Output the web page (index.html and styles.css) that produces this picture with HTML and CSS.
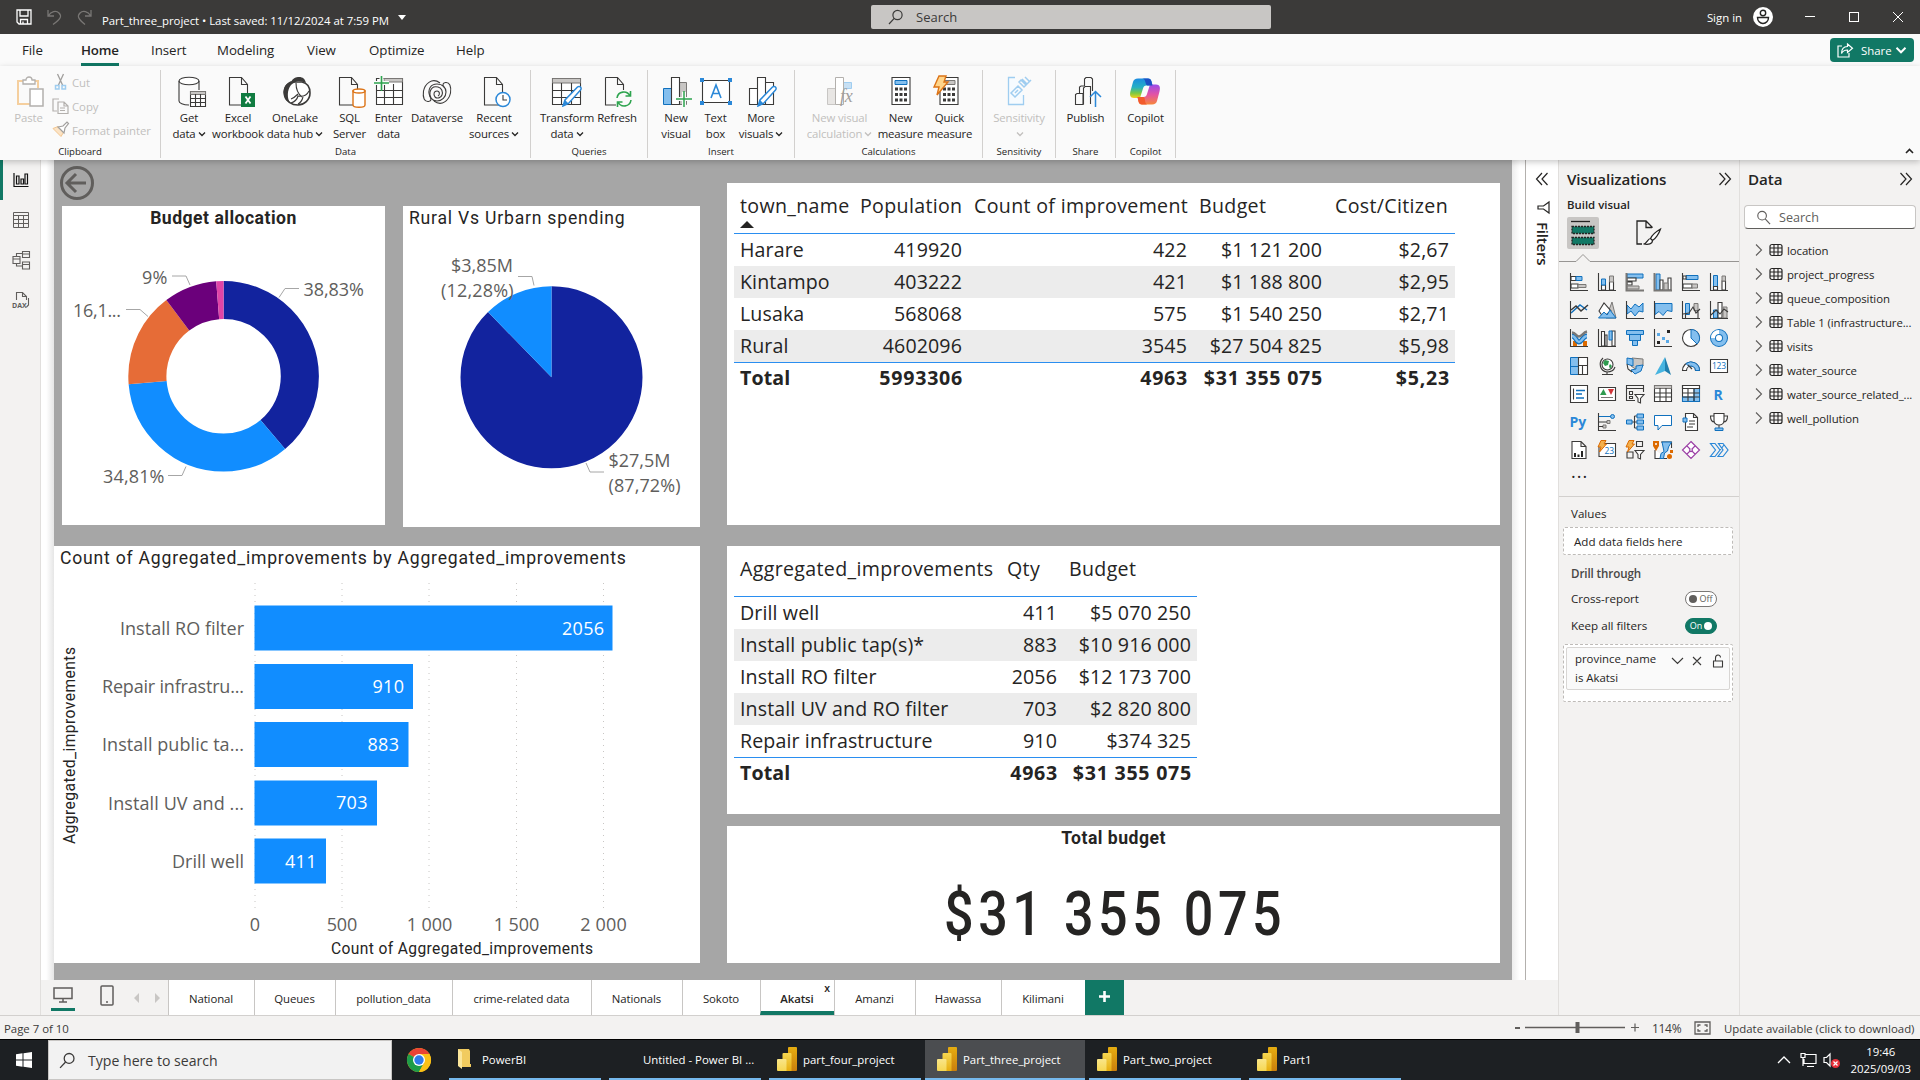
FILE: index.html
```html
<!DOCTYPE html>
<html lang="en">
<head>
<meta charset="utf-8">
<title>Part_three_project - Power BI Desktop</title>
<link rel="stylesheet" href="styles.css">
</head>
<body>
<svg class="defs" width="0" height="0">
  <defs>
    <linearGradient id="cpA" x1="0" y1="0" x2="0" y2="1"><stop offset="0" stop-color="#1b8be0"/><stop offset=".45" stop-color="#25b0c4"/><stop offset=".75" stop-color="#7ac943"/><stop offset="1" stop-color="#f7d01c"/></linearGradient>
    <linearGradient id="cpB" x1="0" y1="0" x2="0" y2="1"><stop offset="0" stop-color="#9a4bea"/><stop offset=".5" stop-color="#e353a4"/><stop offset="1" stop-color="#f7863a"/></linearGradient>
    <linearGradient id="pbA" x1="0" y1="0" x2="0" y2="1"><stop offset="0" stop-color="#e6ad10"/><stop offset="1" stop-color="#c87e0e"/></linearGradient>
    <linearGradient id="pbB" x1="0" y1="0" x2="0" y2="1"><stop offset="0" stop-color="#f6d751"/><stop offset="1" stop-color="#e6ad10"/></linearGradient>
    <linearGradient id="pbC" x1="0" y1="0" x2="0" y2="1"><stop offset="0" stop-color="#f9e589"/><stop offset="1" stop-color="#f6d751"/></linearGradient>
    <symbol id="chev" viewBox="0 0 8 8"><path d="M1 2.500 4 5.500 7 2.500" fill="none" stroke="currentColor" stroke-width="1.300"/></symbol>
    <symbol id="grid" viewBox="0 0 14 14"><rect x="1" y="1.500" width="12" height="11" rx="2" fill="none" stroke="#252423" stroke-width="1.200"/><path d="M1 5h12M1 9h12M5 1.500v11M9 1.500v11" stroke="#252423" stroke-width="1.100"/></symbol>
    <symbol id="next" viewBox="0 0 8 14"><path d="M1 1.500 6.500 7 1 12.500" fill="none" stroke="#605e5c" stroke-width="1.100"/></symbol>
    <symbol id="dbl" viewBox="0 0 14 14"><path d="M1.500 1 7 7 1.500 13M7 1 12.500 7 7 13" fill="none" stroke="#252423" stroke-width="1.200"/></symbol>
    <symbol id="pbi" viewBox="0 0 20 24"><rect x="11" y="0" width="9" height="24" rx="1" fill="url(#pbA)"/><path d="M5.500 7a1 1 0 0 1 1-1h7a1 1 0 0 1 1 1v17h-9z" fill="url(#pbB)"/><path d="M0 13a1 1 0 0 1 1-1h7.500a1 1 0 0 1 1 1v11H1a1 1 0 0 1-1-1z" fill="url(#pbC)"/></symbol>
    <symbol id="lens" viewBox="0 0 16 16"><circle cx="9.500" cy="6" r="4.600" fill="none" stroke="currentColor" stroke-width="1.200"/><path d="M6.200 9.400 1 15" stroke="currentColor" stroke-width="1.200"/></symbol>
    <symbol id="pencil" viewBox="0 0 20 22"><path d="M1 21l2-6L15.500 2a2 2 0 0 1 3 3L6.500 18.500z" fill="#fff" stroke="#2b88d8" stroke-width="1.500"/><path d="M1 21l2-6 3.500 3.500z" fill="#2b88d8"/></symbol>
  </defs>
</svg>

<div class="app">
  <header class="titlebar">
    <div class="quick">
      <svg width="16" height="16" viewBox="0 0 16 16"><path d="M1 1h14v14H3l-2-2zM4 1v6h8V1M4.500 15v-4.500h7V15M7 12.500V15" fill="none" stroke="#fff" stroke-width="1.300"/></svg>
      <svg width="15" height="16" viewBox="0 0 15 16"><path d="M1 1v6h6M1.500 6.500C4 2.500 9 1 12 4s2 6-6 11.500" fill="none" stroke="#797775" stroke-width="1.300"/></svg>
      <svg width="15" height="16" viewBox="0 0 15 16"><path d="M14 1v6H8M13.500 6.500C11 2.500 6 1 3 4s-2 6 5 11.500" fill="none" stroke="#797775" stroke-width="1.300"/></svg>
      <span class="filename">Part_three_project • Last saved: 11/12/2024 at 7:59 PM</span>
      <svg width="8" height="5"><path d="M0 0h8L4 5z" fill="#fff"/></svg>
    </div>
    <div class="top-search"><svg width="16" height="16"><use href="#lens"/></svg><span>Search</span></div>
    <div class="window">
      <span class="signin">Sign in</span>
      <svg class="avatar" width="20" height="20" viewBox="0 0 20 20"><circle cx="10" cy="10" r="10" fill="#fff"/><circle cx="10" cy="6" r="2.700" fill="none" stroke="#252423" stroke-width="1.400"/><path d="M4.500 10.500h11c0 3.500-2.500 6-5.500 6s-5.500-2.500-5.500-6z" fill="none" stroke="#252423" stroke-width="1.400"/></svg>
      <svg width="12" height="12"><path d="M1 5.500h10" stroke="#fff"/></svg>
      <svg width="12" height="12"><rect x="1.500" y="1.500" width="9" height="9" fill="none" stroke="#fff"/></svg>
      <svg width="12" height="12"><path d="M1 1l10 10M11 1 1 11" stroke="#fff"/></svg>
    </div>
  </header>

  <nav class="menu">
    <span class="m1">File</span><span class="m2 on">Home</span><span class="m3">Insert</span><span class="m4">Modeling</span><span class="m5">View</span><span class="m6">Optimize</span><span class="m7">Help</span>
    <button class="share"><svg width="17" height="15" viewBox="0 0 17 15"><path d="M5 3H1v11h11V10" fill="none" stroke="#fff" stroke-width="1.200"/><path d="M10.500 1l5 4.200-5 4.300V7C7 7 5.500 8.500 4.500 10.500 4.500 6 7 3.600 10.500 3.500z" fill="none" stroke="#fff" stroke-width="1.200"/></svg><span>Share</span><svg width="12" height="12"><use href="#chev"/></svg></button>
  </nav>

  <div class="ribbon">
    <section class="group g-clip">
      <div class="items">
        <div class="item w-paste off"><svg width="28" height="32" viewBox="0 0 28 32"><path d="M8 5H2v23h12M18 5h4v7" fill="none" stroke="#f5cf9e" stroke-width="2"/><path d="M7 8V4h3c0-4 6-4 6 0h3v4z" fill="#fff" stroke="#b3b0ad" stroke-width="1.300"/><path d="M14 13h13v17H14z" fill="#fff" stroke="#b3b0ad" stroke-width="1.500"/></svg><span>Paste</span></div>
        <div class="clip-list off">
          <div><svg width="16" height="16" viewBox="0 0 16 16"><path d="M5 0l5.500 12M11 0 5.500 12" stroke="#a19f9d" stroke-width="1.300"/><path d="M3 11.500h3.500V15H3zM9.500 11.500H13V15H9.500z" fill="none" stroke="#9fcdf0" stroke-width="1.500"/></svg>Cut</div>
          <div><svg width="17" height="16" viewBox="0 0 17 16"><path d="M5 13H1V1h6M6 4h6l4 4v7.500H6zM12 4v4h4M8 10h5M8 12.500h5" fill="none" stroke="#b3b0ad" stroke-width="1.200"/></svg>Copy</div>
          <div><svg width="17" height="16" viewBox="0 0 17 16"><path d="M1 6.500l8 8 3-5-6-5z" fill="#fbe3c5" stroke="#f3c68f"/><path d="M6 5l5-1 4-4 1.500 1.500L13 6l-1 5z" fill="#fff" stroke="#a19f9d" stroke-width="1.200"/></svg>Format painter</div>
        </div>
      </div><h4>Clipboard</h4>
    </section>
    <section class="group g-data">
      <div class="items">
        <div class="item i1"><svg width="28" height="32" viewBox="0 0 28 32"><ellipse cx="11" cy="5" rx="10" ry="3.800" class="w"/><path d="M1 5v20c0 2 4 4 10 4M21 5v9" class="k"/><path d="M12.500 15.500h15v15h-15z" class="w"/><path d="M12.500 15.500h15v3h-15z" class="g"/><path d="M12.500 22.500h15M12.500 26.500h15M17.500 18v12M22.500 18v12" class="k"/></svg><span>Get<br>data<svg class="cv"><use href="#chev"/></svg></span></div>
        <div class="item i2"><svg width="28" height="32" viewBox="0 0 28 32"><path d="M2.500 1.500h12l6 7V29h-18zM14.500 1.500v7h6" class="k"/><path d="M14 17h14v14H14z" fill="#107c41"/><path d="M18.500 20.500l5 7M23.500 20.500l-5 7" stroke="#fff" stroke-width="1.800"/></svg><span>Excel<br>workbook</span></div>
        <div class="item i3"><svg width="30" height="32" viewBox="0 0 30 32"><path d="M9 6c-6 3-8 9-6 14 2 6 7 9 13 9s12-5 12-12c0-6-3-10-8-11z" fill="#fff" stroke="#3b3a39" stroke-width="1.600"/><path d="M9 6c2-4 5-5 8-5 4 0 6 2 7 6-2-1-5-2-8-2-3 1-5 2-7 4-4 5-4 13-1 18C3 25 1 20 1.500 15 2 10 5 7 9 6z" fill="#3b3a39"/><path d="M14 7c0 6 2 11 6 14M9 23c3-1 5-3 7-5M27 15c-2 4-6 6-11 5-1 4-4 6-7 7" class="k"/><path d="M16 28c2-1 4-3 5-7" class="k"/></svg><span>OneLake<br>data hub<svg class="cv"><use href="#chev"/></svg></span></div>
        <div class="item i4"><svg width="30" height="32" viewBox="0 0 30 32"><path d="M3.500 1.500h12l6 7V29h-18zM15.500 1.500v7h6" class="k"/><path d="M17 15v14c0 3 12 3 12 0V15z" fill="#fff" stroke="#dc7316" stroke-width="1.400"/><ellipse cx="23" cy="15" rx="6" ry="2" fill="#fff" stroke="#dc7316" stroke-width="1.400"/></svg><span>SQL<br>Server</span></div>
        <div class="item i5"><svg width="30" height="32" viewBox="0 0 30 32"><path d="M2.500 2.500h26v26h-26z" class="w"/><path d="M10 2.500h18.500V6H10z" class="g"/><path d="M2.500 14.500h26M2.500 21.500h26M10.500 8v20M19.500 8v20" class="k"/><path d="M0 7h15M7.500 0v14" stroke="#fafafa" stroke-width="4"/><path d="M0 7h15M7.500 0v15" stroke="#2ea44f" stroke-width="1.600"/></svg><span>Enter<br>data</span></div>
        <div class="item i6"><svg width="30" height="32" viewBox="0 0 30 32"><path d="M18 7C10 1 3 8 1.500 15c-1 7 1 11 5 10.500 3-.5 3-2 1.500-5C5 13 9 8 15 8c6 0 9 4 9 8 0 5-4 9-9 9M12 25c8 6 15-1 16.500-8 1-7-1-11-5-10.500-3 .500-3 2-1.500 5" class="k"/><path d="M15 25c-5 0-8-4-7-9 1-4 4-6 8-5 4 1 5 5 4 8-1 3-5 4-7 2-2-3-1-6 2-6s3 4 1 5" class="k"/></svg><span>Dataverse</span></div>
        <div class="item i7"><svg width="30" height="32" viewBox="0 0 30 32"><path d="M3.500 1.500h12l6 7V29h-18zM15.500 1.500v7h6" class="k"/><circle cx="22" cy="23.500" r="7" fill="#fff" stroke="#2b88d8" stroke-width="1.500"/><path d="M22 19v5h4" class="k"/></svg><span>Recent<br>sources<svg class="cv"><use href="#chev"/></svg></span></div>
      </div><h4>Data</h4>
    </section>
    <section class="group g-quer">
      <div class="items">
        <div class="item q1"><svg width="32" height="32" viewBox="0 0 32 32"><path d="M1.500 2.500h28v26h-28z" class="w"/><path d="M1.500 2.500h28V7h-28z" class="g"/><path d="M1.500 14.500h28M1.500 21.500h28M10.500 7v21M20.500 7v21" class="k"/><use href="#pencil" x="11" y="9" width="20" height="22"/></svg><span>Transform<br>data<svg class="cv"><use href="#chev"/></svg></span></div>
        <div class="item q2"><svg width="30" height="32" viewBox="0 0 30 32"><path d="M3.500 1.500h12l6 7V14M14 29H3.500V1.500M15.500 1.500v7h6" class="k"/><path d="M15 22c1-7 10-8 13-2M29 24c-1 7-10 8-13 2M28.500 15v5h-5M15.500 31v-5h5" fill="none" stroke="#2ea44f" stroke-width="1.600"/></svg><span>Refresh</span></div>
      </div><h4>Queries</h4>
    </section>
    <section class="group g-ins">
      <div class="items">
        <div class="item n1"><svg width="32" height="32" viewBox="0 0 32 32"><path d="M2.500 12.500h8v16h-8z" class="b"/><path d="M18.500 6.500h7v22h-7z" class="g"/><path d="M10.500 1.500h8v27h-8z" class="w"/><path d="M23 16v15M16 23h14" stroke="#fafafa" stroke-width="4"/><path d="M23 15v16M15 23h16" stroke="#2ea44f" stroke-width="1.500"/></svg><span>New<br>visual</span></div>
        <div class="item n2"><svg width="32" height="32" viewBox="0 0 32 32"><path d="M2.500 4.500h27v22h-27z" class="w"/><path d="M0 2h4v4H0zM28 2h4v4h-4zM0 25h4v4H0zM28 25h4v4h-4z" fill="#2b88d8"/><path d="M11 22l5-13 5 13M13 17.500h6" fill="none" stroke="#2b88d8" stroke-width="1.600"/></svg><span>Text<br>box</span></div>
        <div class="item n3"><svg width="32" height="32" viewBox="0 0 32 32"><path d="M3.500 12.500h8v16h-8zM19.500 6.500h8v22h-8zM11.500 1.500h8v27h-8z" class="w"/><use href="#pencil" x="11" y="9" width="20" height="22"/></svg><span>More<br>visuals<svg class="cv"><use href="#chev"/></svg></span></div>
      </div><h4>Insert</h4>
    </section>
    <section class="group g-calc">
      <div class="items">
        <div class="item c1 off"><svg width="30" height="32" viewBox="0 0 30 32"><path d="M2.500 12.500h8v16h-8z" fill="#e8e6e4" stroke="#c8c6c4"/><path d="M18.500 6.500h8v6h-8z" fill="#c7e0f4" stroke="#9fcdf0"/><path d="M10.500 1.500h8v27h-8z" fill="#fff" stroke="#b3b0ad"/><text x="15" y="26" class="fx">fx</text></svg><span>New visual<br>calculation<svg class="cv"><use href="#chev"/></svg></span></div>
        <div class="item c2"><svg width="20" height="32" viewBox="0 0 20 32"><path d="M1 1.500h18v27H1z" class="w"/><path d="M4 4.500h12v4H4z" class="b"/><path d="M4 13h12M4 18.500h12M4 24h12" stroke="#3b3a39" stroke-width="3" stroke-dasharray="3 1.500"/></svg><span>New<br>measure</span></div>
        <div class="item c3"><svg width="30" height="32" viewBox="0 0 30 32"><path d="M7 1.500h18v27H7z" class="w"/><path d="M12 4.500h10v4H12z" class="g"/><path d="M10 13h12M10 18.500h12M10 24h12" stroke="#3b3a39" stroke-width="3" stroke-dasharray="3 1.500"/><path d="M6 0h7l-2 6h4L4 19l2-8H1z" fill="#ffd58a" stroke="#dc7316" stroke-width="1.400"/></svg><span>Quick<br>measure</span></div>
      </div><h4>Calculations</h4>
    </section>
    <section class="group g-sens">
      <div class="items"><div class="item off"><svg width="28" height="32" viewBox="0 0 28 32"><path d="M10 1.500H3.500v27h15V19" fill="#f6fbff" stroke="#9fcdf0" stroke-width="1.300"/><path d="M6 17l7-7 4 4-7 7zM10 17l3-3M14 6l5 5 2-2-5-5zM17 3l5 5 4-4M20 1l4 4" fill="none" stroke="#9fcdf0" stroke-width="1.500"/></svg><span>Sensitivity<br><svg class="cv"><use href="#chev"/></svg></span></div></div><h4>Sensitivity</h4>
    </section>
    <section class="group g-share">
      <div class="items"><div class="item pub"><svg width="28" height="32" viewBox="0 0 28 32"><path d="M1.500 28.500v-10l1.500-1h6v11zM5.500 17v-6l1.500-1h3M9.500 28.500V12l1.500-1.500h5.500V28M10.500 10V3l1.500-1.500h5L18.500 3v12" class="k"/><path d="M21.500 31V16M16 21l5.500-5.500L27 21" fill="none" stroke="#2b88d8" stroke-width="1.500"/></svg><span>Publish</span></div></div><h4>Share</h4>
    </section>
    <section class="group g-cop">
      <div class="items"><div class="item"><svg width="32" height="32" viewBox="0 0 32 32"><path d="M9 2.500h10c2 0 3 1 3.500 3l1 4h-6c-2 0-3 1-3.500 3L11 22H5c-4 0-4.500-3-3.500-7L4 6c.7-2.300 2-3.500 5-3.500z" fill="url(#cpA)"/><path d="M23 28.500H13c-2 0-3-1-3.500-3L8.500 21h6c2 0 3-1 3.500-3l3-9.500h6c4 0 4.500 3 3.500 7l-2.500 9.500c-.7 2.300-2 3.500-5 3.500z" fill="url(#cpB)"/><path d="M13 2.500h6c2 0 3 1 3.500 3l1 4h-5c-3-1-1-7-5.500-7z" fill="#1b50c4"/><path d="M8.500 21h5.500c3 0 1 6 4 7.500h-5c-2 0-3-1-3.500-3z" fill="#f25a2c"/></svg><span>Copilot</span></div></div><h4>Copilot</h4>
    </section>
    <svg class="collapse" width="9" height="6"><path d="M1 5 4.500 1.500 8 5" fill="none" stroke="#252423" stroke-width="1.600"/></svg>
  </div>

  <main class="work">
    <div class="center">
      <div class="stage">
        <nav class="rail">
          <div class="on"><svg width="16" height="16" viewBox="0 0 16 16"><path d="M1 1v13.500h14.500M3.500 4v8h2.500V4zM8 7v5h2.500V7zM12 2v10h2.500V2z" fill="none" stroke="#111" stroke-width="1.200"/></svg></div>
          <div><svg width="18" height="18" viewBox="0 0 18 18"><path d="M1.500 1.500h15v15h-15zM1.500 4.500h15M1.500 8.500h15M1.500 12.500h15M6.500 4.500v12M11.500 4.500v12" fill="none" stroke="#605e5c"/></svg></div>
          <div><svg width="18" height="20" viewBox="0 0 18 20"><path d="M1 6.500h7v7H1zM1 9h7M10.500 1.500h7v6h-7zM10.500 4h7M10.500 12h7v7h-7zM10.500 14.500h7M4.500 6.500V3.500h6M4.500 13.500v2.500h6" fill="none" stroke="#605e5c" stroke-width="1.100"/></svg></div>
          <div><svg width="20" height="18" viewBox="0 0 20 18"><path d="M5.500 9V1.500h6l4 4V9M11.500 1.500v4h4M17.500 7v7l-2 2" fill="none" stroke="#605e5c" stroke-width="1.100"/><text x="1" y="17" class="dax">DAX</text></svg></div>
        </nav>
        <div class="gutter left"></div>
        <div class="canvas">
          <div class="col-left">
            <div class="back"><svg width="36" height="36" viewBox="0 0 36 36"><circle cx="18" cy="18" r="15.500" fill="none" stroke="#605e5c" stroke-width="3"/><path d="M27 18H9M17 9l-9 9 9 9" fill="none" stroke="#605e5c" stroke-width="3"/></svg></div>
            <div class="pies">
              <section class="card budget">
                <h3 class="din bold">Budget allocation</h3>
                <svg width="323" height="295" viewBox="62 230 323 295">
                  <g class="ring" transform="rotate(-90 223.600 376.300)">
                    <circle cx="223.600" cy="376.300" r="76.250" pathLength="100" stroke="#12239e" stroke-dasharray="38.830 61.170"/>
                    <circle cx="223.600" cy="376.300" r="76.250" pathLength="100" stroke="#118dff" stroke-dasharray="34.810 65.190" stroke-dashoffset="-38.830"/>
                    <circle cx="223.600" cy="376.300" r="76.250" pathLength="100" stroke="#e66c37" stroke-dasharray="16.100 83.900" stroke-dashoffset="-73.640"/>
                    <circle cx="223.600" cy="376.300" r="76.250" pathLength="100" stroke="#6b007b" stroke-dasharray="9 91" stroke-dashoffset="-89.740"/>
                    <circle cx="223.600" cy="376.300" r="76.250" pathLength="100" stroke="#e044a7" stroke-dasharray="1.260 98.740" stroke-dashoffset="-98.740"/>
                  </g>
                  <g class="lead"><path d="M172 276h14l4 9M299 288.500h-14l-6 9M126 309.500h14l8 7M168 475.500h14l4-9"/></g>
                  <g class="lbl"><text x="142" y="283.500" textLength="25.500">9%</text><text x="303.500" y="296" textLength="60.500">38,83%</text><text x="73" y="317" textLength="48">16,1...</text><text x="103" y="483" textLength="61.500">34,81%</text></g>
                </svg>
              </section>
              <section class="card rural">
                <h3 class="din">Rural Vs Urbarn spending</h3>
                <svg width="297" height="297" viewBox="403 230 297 297">
                  <g transform="rotate(-90 551.500 377.300)" fill="none" stroke-width="91">
                    <circle cx="551.500" cy="377.300" r="45.500" pathLength="100" stroke="#12239e" stroke-dasharray="87.720 12.280"/>
                    <circle cx="551.500" cy="377.300" r="45.500" pathLength="100" stroke="#118dff" stroke-dasharray="12.280 87.720" stroke-dashoffset="-87.720"/>
                  </g>
                  <g class="lead"><path d="M518 276.500h14l2 9M604 472h-14l-4-9"/></g>
                  <g class="lbl"><text x="451" y="272" textLength="62">$3,85M</text><text x="441" y="297" textLength="72.500">(12,28%)</text><text x="608.500" y="467" textLength="62">$27,5M</text><text x="608.500" y="492" textLength="72">(87,72%)</text></g>
                </svg>
              </section>
            </div>
            <section class="card bars">
              <h3 class="din wide">Count of Aggregated_improvements by Aggregated_improvements</h3>
              <svg width="646" height="391" viewBox="54 572 646 391">
                <path class="gridline" d="M255 583v326M342 583v326M429 583v326M516.500 583v326M603.500 583v326"/>
                <g fill="#118dff"><rect x="254.500" y="605.500" width="358" height="45"/><rect x="254.500" y="664" width="158.500" height="45"/><rect x="254.500" y="722" width="154" height="45"/><rect x="254.500" y="780.500" width="122.500" height="45"/><rect x="254.500" y="838.500" width="71.500" height="45"/></g>
                <g class="lbl end"><text x="244" y="634.500" textLength="124">Install RO filter</text><text x="244" y="692.500" textLength="142">Repair infrastru...</text><text x="244" y="751" textLength="142">Install public ta...</text><text x="244" y="809.500" textLength="136">Install UV and ...</text><text x="244" y="867.500" textLength="72">Drill well</text></g>
                <g class="lbl end val"><text x="604" y="634.500" textLength="42">2056</text><text x="404" y="692.500" textLength="31.500">910</text><text x="399" y="750.500" textLength="31.500">883</text><text x="367.500" y="808.500" textLength="31.500">703</text><text x="316.500" y="867.500" textLength="31.500">411</text></g>
                <g class="lbl mid"><text x="255" y="930.500" textLength="10">0</text><text x="342" y="930.500" textLength="30.500">500</text><text x="429.500" y="930.500" textLength="45.500">1 000</text><text x="516.500" y="930.500" textLength="45.500">1 500</text><text x="603.500" y="930.500" textLength="46.500">2 000</text></g>
                <text class="axis" x="331" y="954" textLength="262">Count of Aggregated_improvements</text>
                <text class="axis" transform="translate(75 844) rotate(-90)" textLength="197">Aggregated_improvements</text>
              </svg>
            </section>
          </div>
          <div class="col-right">
            <section class="card towns">
              <table>
                <colgroup><col class="t1"><col class="t2"><col class="t3"><col class="t4"><col class="t5"></colgroup>
                <thead><tr><th>town_name<i class="sort"></i></th><th>Population</th><th>Count of improvement</th><th>Budget</th><th>Cost/Citizen</th></tr></thead>
                <tbody>
                  <tr><td>Harare</td><td>419920</td><td>422</td><td>$1 121 200</td><td>$2,67</td></tr>
                  <tr><td>Kintampo</td><td>403222</td><td>421</td><td>$1 188 800</td><td>$2,95</td></tr>
                  <tr><td>Lusaka</td><td>568068</td><td>575</td><td>$1 540 250</td><td>$2,71</td></tr>
                  <tr><td>Rural</td><td>4602096</td><td>3545</td><td>$27 504 825</td><td>$5,98</td></tr>
                </tbody>
                <tfoot><tr><td>Total</td><td>5993306</td><td>4963</td><td>$31 355 075</td><td>$5,23</td></tr></tfoot>
              </table>
            </section>
            <section class="card improv">
              <table>
                <colgroup><col class="u1"><col class="u2"><col class="u3"></colgroup>
                <thead><tr><th>Aggregated_improvements</th><th>Qty</th><th>Budget</th></tr></thead>
                <tbody>
                  <tr><td>Drill well</td><td>411</td><td>$5 070 250</td></tr>
                  <tr><td>Install public tap(s)*</td><td>883</td><td>$10 916 000</td></tr>
                  <tr><td>Install RO filter</td><td>2056</td><td>$12 173 700</td></tr>
                  <tr><td>Install UV and RO filter</td><td>703</td><td>$2 820 800</td></tr>
                  <tr><td>Repair infrastructure</td><td>910</td><td>$374 325</td></tr>
                </tbody>
                <tfoot><tr><td>Total</td><td>4963</td><td>$31 355 075</td></tr></tfoot>
              </table>
            </section>
            <section class="card total">
              <h3 class="din bold">Total budget</h3>
              <svg width="773" height="110" viewBox="727 850 773 110"><text class="big" transform="translate(944 935) scale(.84 1)" textLength="402">$31 355 075</text></svg>
            </section>
          </div>
        </div>
        <div class="gutter right"></div>
        <aside class="filters">
          <svg class="flip" width="14" height="14"><use href="#dbl"/></svg>
          <svg width="13" height="13" viewBox="0 0 13 13"><path d="M12 1v11L6.500 8H1V5h5.500z" fill="none" stroke="#252423" stroke-width="1.200"/></svg>
          <span>Filters</span>
        </aside>
      </div>
      <div class="pages">
        <div class="views">
          <div class="view on"><svg width="20" height="16" viewBox="0 0 20 16"><path d="M1 1h18v10.500H1zM10 11.500V15M6 15h8" fill="none" stroke="#605e5c" stroke-width="1.500"/></svg></div>
          <div class="view"><svg width="14" height="21" viewBox="0 0 14 21"><rect x="1" y="1" width="12" height="19" rx="1" fill="none" stroke="#605e5c" stroke-width="1.500"/><path d="M6 17h2" stroke="#605e5c" stroke-width="1.500"/></svg></div>
          <svg class="arrows" width="28" height="10"><path d="M5 0v10L0 5zM21 0v10l5-5z" fill="#c8c6c4"/></svg>
        </div>
        <span class="tab p1">National</span><span class="tab p2">Queues</span><span class="tab p3">pollution_data</span><span class="tab p4">crime-related data</span><span class="tab p5">Nationals</span><span class="tab p6">Sokoto</span><span class="tab p7 on">Akatsi<b class="close">x</b></span><span class="tab p8">Amanzi</span><span class="tab p9">Hawassa</span><span class="tab p10">Kilimani</span>
        <span class="add"><svg width="11" height="11"><path d="M5.500 0v11M0 5.500h11" stroke="#fff" stroke-width="2.600"/></svg></span>
      </div>
    </div>

    <aside class="viz">
      <div class="phead"><h2>Visualizations</h2><svg width="14" height="14"><use href="#dbl"/></svg></div>
      <h5>Build visual</h5>
      <div class="modes">
        <div class="mode on"><svg width="26" height="28" viewBox="0 0 26 28"><path d="M1 2.500h19" stroke="#252423" stroke-width="1.300"/><path d="M2 7.500h22v7H2zM2 18.500h22v7H2z" fill="#117865" stroke="#252423" stroke-width="1.300" stroke-dasharray="2 1"/></svg></div>
        <div class="mode"><svg width="26" height="26" viewBox="0 0 26 26"><path d="M16 8V7l-6-6H1v23h5M10 1v6.500h6" fill="none" stroke="#252423" stroke-width="1.300"/><path d="M24.500 9c-5 3-9 7-10 9.500l2 2C19 19 23 14 24.500 9zM14.500 18.500c-3 0-3 5-7 5.500 5 1 9 0 9-3.500z" fill="#fff" stroke="#252423" stroke-width="1.200"/></svg></div>
      </div>
      <svg class="notch" width="180" height="10"><path d="M0 8.500h17l7-7 7 7h149" fill="#f3f2f1" stroke="#979593"/></svg>
      <div class="gallery">
        <svg viewBox="0 0 18 18"><path class="w" d="M1 3.500h5v4H1zM1 11h7v4H1z"/><path class="b" d="M6 3.500h6v4H6z"/><path class="g" d="M8 11.500h8v3H8z"/><path class="k" d="M.5 0v17.500H18"/></svg>
        <svg viewBox="0 0 18 18"><path class="w" d="M3.500 12h4v5h-4zM11.500 8h4v9h-4z"/><path class="b" d="M3.500 6h4v6h-4z"/><path class="g" d="M11.500 3h4v6h-4z"/><path class="k" d="M.5 0v17.500H18"/></svg>
        <svg viewBox="0 0 18 18"><path class="b" d="M1 1h16v4H1z"/><path class="w" d="M1 5h9v3H1zM1 9h5v3H1z"/><path class="g" d="M1 13h12v3H1z"/><path d="M.5 0v17.500H18" fill="none" stroke="#797775" stroke-width="2"/></svg>
        <svg viewBox="0 0 18 18"><path class="b" d="M2 1h4v16H2z"/><path class="w" d="M6 7h3v10H6zM14 5h3v12h-3z"/><path class="g" d="M10 10h4v7h-4z"/><path d="M.5 0v17.500H18" fill="none" stroke="#797775" stroke-width="2"/></svg>
        <svg viewBox="0 0 18 18"><path class="b" d="M4 2.500h12v4H4z"/><path class="w" d="M1 3h3v3H1zM1 11h9v4H1z"/><path class="g" d="M10 11h5.500v4H10z"/><path class="k" d="M.5 0v17.500H18"/></svg>
        <svg viewBox="0 0 18 18"><path class="b" d="M3.500 2.500h4v11h-4z"/><path class="w" d="M3.500 13.500h4V17h-4zM12 8h3.500v9H12z"/><path class="g" d="M12 3h3.500v5H12z"/><path class="k" d="M.5 0v17.500H18"/></svg>

        <svg viewBox="0 0 18 18"><path class="bl thick" d="M1 12 10 4l7 5"/><path class="k thick" d="M1 9l5-4 5 5 7-6"/><path class="k" d="M.5 0v17.500H18"/></svg>
        <svg viewBox="0 0 18 18"><path class="g" d="M8 17 14 1l4 16z"/><path class="w" d="M1 10 6 2l7 8-8 6z"/><path class="b" d="M.5 17 6 11l3 3 3-5 6 8z"/></svg>
        <svg viewBox="0 0 18 18"><path class="b" d="M1 4l4 4 4-5 4 3 4-4v9l-4-1-4 5-4-5-4 3z"/><path class="k" d="M.5 0v17.500H18"/></svg>
        <svg viewBox="0 0 18 18"><path class="b" d="M1 2.500h17v8l-5-1-4 5-4-4-4 3z"/><path class="k" d="M.5 0v17.500H18"/></svg>
        <svg viewBox="0 0 18 18"><path class="b" d="M3.500 2.500h4v11h-4z"/><path class="g" d="M12 2.500h4v7h-4z"/><path class="k" d="M3.500 13v4M16 9v8M1 13l6-1 4-6 3 6 4-4M.5 0v17.500H18"/></svg>
        <svg viewBox="0 0 18 18"><path class="b" d="M3.500 9h4v8h-4z"/><path class="w" d="M8 1.500h4V17H8z"/><path class="g" d="M13 6h4v11h-4z"/><path class="k" d="M1 14l5-5 4 4 4-5 4 3M.5 0v17.500H18"/></svg>

        <svg viewBox="0 0 18 18"><path class="or" d="M3 12h4v5H3zM13 12h4v5h-4z"/><path d="M2 7c4 0 4 6 7 6s4-6 8-6" fill="none" stroke="#1070bd" stroke-width="5"/><path d="M2 7c4 0 4 6 7 6s4-6 8-6" fill="none" stroke="#84bfee" stroke-width="2.500"/><path d="M2 3.500c4 0 4 4 7 4s4-4 8-5" fill="none" stroke="#7a7876" stroke-width="2.500"/><path class="k" d="M.5 0v17.500H18"/></svg>
        <svg viewBox="0 0 18 18"><path class="w" d="M3.500 2.500h3V17h-3zM7 6h2v11H7zM14 2h3v15h-3z"/><path class="b" d="M11 2h3v9h-3z"/><path class="k" d="M.5 0v17.500H18"/></svg>
        <svg viewBox="0 0 18 18"><path class="b" d="M.5 1.500h17v4H.500zM3.500 5.500h11v6h-11zM6.500 11.500h5v5h-5z"/></svg>
        <svg viewBox="0 0 18 18"><path d="M13 1h3v3h-3zM3 12h3v3H3z" fill="#252423"/><path d="M3 4h3v3H3zM8 8h3v3H8zM12 11h3v3h-3z" fill="#5aa9e6"/><path class="k" d="M.5 0v17.500H18"/></svg>
        <svg viewBox="0 0 18 18"><circle class="w" cx="9" cy="9" r="8.500"/><path class="b" d="M9 9V.500A8.500 8.500 0 0 1 15 15z"/></svg>
        <svg viewBox="0 0 18 18"><circle cx="9" cy="9" r="6" fill="#fff" stroke="#1070bd" stroke-width="6"/><circle cx="9" cy="9" r="6" fill="none" stroke="#84bfee" stroke-width="4"/><path d="M9 3A6 6 0 0 0 3 9" fill="none" stroke="#fff" stroke-width="4"/></svg>

        <svg viewBox="0 0 18 18"><path class="b" d="M.5.500h8v17h-8zM.5 9.500h8"/><path class="w" d="M8.500.500h9v8h-9zM8.500 8.500h4v9h-4zM12.500 8.500h5v9h-5z"/></svg>
        <svg viewBox="0 0 18 18"><circle class="w" cx="9.500" cy="7.500" r="5.500"/><path d="M7 3l4 1-1 4-3 1-2-3zM12 7l2 2-2 3-1-3z" fill="#2e9b4f"/><path class="k" d="M5 1C0 6 2 14 9 15c4 0 7-2 8-5M9 15v2.500M4 17.500h11"/></svg>
        <svg viewBox="0 0 18 18"><path class="g" d="M6 1l11 1v7l-6 4-6-4z"/><path class="b" d="M1 1l6 1v7l-6-2zM10 9l7-1-2 6-6 3-4-4 5-1z"/><path class="k" d="M1 7l1 5 4 3"/></svg>
        <svg viewBox="0 0 18 18"><path d="M11 0 1 18l10-4z" fill="#47b4e0"/><path d="M11 0l6 18-6-4z" fill="#1f7fae"/></svg>
        <svg viewBox="0 0 18 18"><path class="w" d="M.5 13.500a8.500 8.500 0 0 1 17 0h-4a4.500 4.500 0 0 0-9 0z"/><path class="b" d="M4 6.500a8.500 8.500 0 0 1 13.500 7h-4a4.500 4.500 0 0 0-6.500-4z"/><path class="k" d="M6 8l4 4"/></svg>
        <svg viewBox="0 0 18 18"><path class="w" d="M.5 2.500h17v13H.500z"/><text x="2" y="12.300" class="n123" textLength="14">123</text></svg>

        <svg viewBox="0 0 18 18"><path class="w" d="M.5.500h17v17H.500z"/><path class="k" d="M3.500 3.500v11"/><path d="M6 5.500h9M6 9h6M6 13h8" stroke="#1070bd" stroke-width="1.700"/></svg>
        <svg viewBox="0 0 18 18"><path class="w" d="M.5 2.500h17v13H.500z"/><path d="M2 10 5.500 4 8.500 10z" fill="#2e9b4f"/><path d="M10 4h6l-3 6z" fill="#d13438"/><path d="M3 12.500h12" stroke="#797775"/></svg>
        <svg viewBox="0 0 18 18"><path class="k" d="M9 15.500H.500v-15h17V7M.5 3.500h17"/><path class="w" d="M3.500 6.500h3v3h-3zM3.500 11.500h3v2h-3zM9 9.500h9l-3.500 4V18L12 17v-3.500z"/></svg>
        <svg viewBox="0 0 18 18"><path class="w" d="M.5.500h17v16H.500z"/><path class="g" d="M.5.500h17v3H.500z"/><path class="k" d="M.5 8h17M.5 12h17M6 3v13M12 3v13"/></svg>
        <svg viewBox="0 0 18 18"><path class="w" d="M.5.500h17v16H.500z"/><path class="b" d="M12 3.500h5.500v13H12zM.5 12h11.500v4.500H.500z"/><path class="k" d="M.5.500h17v3H.500zM.5 8h17M.5 12h17M6 3v13M12 3v13"/></svg>
        <svg viewBox="0 0 18 18"><text x="3.500" y="14.500" class="rpy">R</text></svg>

        <svg viewBox="0 0 18 18"><text x="-.5" y="13.500" class="rpy">Py</text></svg>
        <svg viewBox="0 0 18 18"><path class="bl" d="M1 3.500h12"/><circle class="b" cx="14.500" cy="3.500" r="2"/><path class="g" d="M9 7.500h3v3H9zM5 12h3v3H5z"/><path class="k" d="M.5 0v17.500H18M1 9h8M1 13.500h4"/></svg>
        <svg viewBox="0 0 18 18"><path class="k" d="M6 9h5M8.500 3v12M8.500 3H11M8.500 15H11"/><path class="b" d="M.5 7h5.500v4H.500zM11 1h6.500v4H11zM11 7h6.500v4H11zM11 13h6.500v4H11z"/></svg>
        <svg viewBox="0 0 18 18"><path d="M.5 2.500h17v10H8l-4 4.500v-4.500H.500z" fill="#fff" stroke="#1070bd"/></svg>
        <svg viewBox="0 0 18 18"><path class="w" d="M3.500.500h8l4 4v13h-12zM11.500.500v4h4"/><path class="b" d="M1 5h4v4H1z"/><path class="k" d="M7 8h6M7 11h6M5 14h6"/></svg>
        <svg viewBox="0 0 18 18"><path class="w" d="M4 .500h10v7c0 6-10 6-10 0zM4 3H.500c0 4 1 6 4 6M14 3h3.500c0 4-1 6-4 6M9 12v3"/><path class="b" d="M5 15h8v2.500H5z"/></svg>

        <svg viewBox="0 0 18 18"><path class="w" d="M2 .500h9l5 5v12H2zM11 .500v5h5"/><path d="M5 12v4M8.500 13.500V16M12 10v6" stroke="#252423" stroke-width="2"/></svg>
        <svg viewBox="0 0 18 18"><path class="w" d="M1 5v10.500h16.500v-13H7"/><text x="6.500" y="13" class="n123">23</text><path d="M3-.5h5L6 3h2.500L1.500 11 3 6H0z" fill="#f3b04d" stroke="#dc6a00"/></svg>
        <svg viewBox="0 0 18 18"><path class="k" d="M10.500.500h6v5h-6zM1 11h6v6H1z"/><path class="w" d="M9 9.500h9l-3.500 4V18L12 17v-3.500z"/><path d="M3-.5h5L6 3h2.500L1.500 11 3 6H0z" fill="#f3b04d" stroke="#dc6a00"/></svg>
        <svg viewBox="0 0 18 18"><path class="w" d="M7 1h10.500v6M1 9v8.500h12"/><path class="b" d="M8 1h9.500l-3 5-1 4-3 2-1 5.500H6l1-5 3-2z"/><path class="or" d="M-1 0h6v5L2 10-1 5z"/><circle cx="2" cy="3" r="1" fill="#fff"/><circle class="or" cx="15.500" cy="15.500" r="2.500"/><path class="or" d="M16 9h3v3h-3z"/></svg>
        <svg viewBox="0 0 18 18"><path d="M9 .500 17.500 9 9 17.500.500 9zM5 5l3 3a1.400 1.400 0 0 0 2 2l3 3M13 5l-3 3a1.400 1.400 0 0 1-2 2l-3 3" fill="#fff" stroke="#9b3fa5" stroke-width="1.200"/></svg>
        <svg viewBox="0 0 18 18"><path d="M.5 2.500h4.500l5 6.500-5 6.500H.5L5.500 9zM8.500 2.500H13L18 9l-5 6.500H8L13 9zM5 15.500 14 4" fill="none" stroke="#2b88d8" stroke-width="1.200"/></svg>
      </div>
      <div class="more">...</div>
      <div class="wells">
        <p>Values</p>
        <div class="drop">Add data fields here</div>
        <p class="dt">Drill through</p>
        <div class="row"><span>Cross-report</span><span class="toggle"><i></i>Off</span></div>
        <div class="row"><span>Keep all filters</span><span class="toggle on">On<i></i></span></div>
        <div class="drop tall"><div class="field"><div>province_name<br>is Akatsi</div>
          <svg width="56" height="14" viewBox="0 0 56 14"><path d="M2 4l5.500 5.500L13 4M23 3l8 8M31 3l-8 8M43.500 7h9v6h-9zM45.500 7V4c0-4 5-4 5-.5" fill="none" stroke="#3b3a39" stroke-width="1.100"/></svg></div></div>
      </div>
    </aside>

    <aside class="data">
      <div class="phead"><h2>Data</h2><svg width="14" height="14"><use href="#dbl"/></svg></div>
      <div class="dsearch"><svg class="flip" width="15" height="15"><use href="#lens"/></svg>Search</div>
      <ul>
        <li><svg width="8" height="14"><use href="#next"/></svg><svg width="14" height="14"><use href="#grid"/></svg>location</li>
        <li><svg width="8" height="14"><use href="#next"/></svg><svg width="14" height="14"><use href="#grid"/></svg>project_progress</li>
        <li><svg width="8" height="14"><use href="#next"/></svg><svg width="14" height="14"><use href="#grid"/></svg>queue_composition</li>
        <li><svg width="8" height="14"><use href="#next"/></svg><svg width="14" height="14"><use href="#grid"/></svg>Table 1 (infrastructure...</li>
        <li><svg width="8" height="14"><use href="#next"/></svg><svg width="14" height="14"><use href="#grid"/></svg>visits</li>
        <li><svg width="8" height="14"><use href="#next"/></svg><svg width="14" height="14"><use href="#grid"/></svg>water_source</li>
        <li><svg width="8" height="14"><use href="#next"/></svg><svg width="14" height="14"><use href="#grid"/></svg>water_source_related_...</li>
        <li><svg width="8" height="14"><use href="#next"/></svg><svg width="14" height="14"><use href="#grid"/></svg>well_pollution</li>
      </ul>
    </aside>
  </main>

  <footer class="status">
    <span class="pageno">Page 7 of 10</span>
    <svg class="zoom" width="126" height="14" viewBox="0 0 126 14"><path d="M0 7h5" stroke="#605e5c" stroke-width="2"/><path d="M10 6.500h100" stroke="#605e5c" stroke-width="1.500"/><path d="M62.500 1v11" stroke="#605e5c" stroke-width="4"/><path d="M116 6.500h8M120 2.500v8" stroke="#605e5c" stroke-width="1.200"/></svg>
    <span class="pct">114%</span>
    <svg class="fit" width="17" height="14" viewBox="0 0 17 14"><path d="M1 1h15v12H1zM4 6V4h2.500M10.500 4H13v2M13 8v2h-2.500M6.500 10H4V8" fill="none" stroke="#605e5c" stroke-width="1.300"/></svg>
    <span class="upd">Update available (click to download)</span>
  </footer>

  <footer class="taskbar">
    <div class="start"><svg width="16" height="16" viewBox="0 0 16 16"><path d="M0 2.300l6.500-1v6.200H0zM7.500 1.200 16 0v7.500H7.500zM0 8.500h6.500v6.200L0 13.800zM7.500 8.500H16V16l-8.500-1.200z" fill="#fff"/></svg></div>
    <div class="tsearch"><svg width="17" height="17"><use href="#lens"/></svg>Type here to search</div>
    <div class="chrome"><svg width="24" height="24" viewBox="0 0 24 24"><circle cx="12" cy="12" r="12" fill="#fbc116"/><path d="M12 12 1.600 6A12 12 0 0 1 22.400 6z" fill="#ea4335"/><path d="M12 12 1.600 6A12 12 0 0 0 12 24l5-9z" fill="#1e9c49"/><path d="M12 6h10.400A12 12 0 0 1 12 24l5-9z" fill="#fbc116"/><circle cx="12" cy="12" r="6" fill="#fff"/><circle cx="12" cy="12" r="4.700" fill="#2f7bea"/></svg></div>
    <div class="task folder"><svg width="15" height="20" viewBox="0 0 15 20"><path d="M1 0h11l1 2v13h1v3H4z" fill="#f1cb5f"/><path d="M1 0l4 3v17L1 17z" fill="#fbe69b"/></svg><span>PowerBI</span></div>
    <div class="task blank"><span>Untitled - Power BI ...</span></div>
    <div class="task"><svg width="20" height="24"><use href="#pbi"/></svg><span>part_four_project</span></div>
    <div class="task active"><svg width="20" height="24"><use href="#pbi"/></svg><span>Part_three_project</span></div>
    <div class="task"><svg width="20" height="24"><use href="#pbi"/></svg><span>Part_two_project</span></div>
    <div class="task"><svg width="20" height="24"><use href="#pbi"/></svg><span>Part1</span></div>
    <div class="tray">
      <svg width="64" height="20" viewBox="0 0 64 20"><path d="M1 13 7 7l6 6" fill="none" stroke="#fff" stroke-width="1.300"/><path d="M28 4.500h11v9H27V9M24 3.500h4v4h-4zM26 7v9M30 16.500h7" fill="none" stroke="#fff" stroke-width="1.200"/><path d="M47 7.500h2.500L53 4v12l-3.500-3.500H47z" fill="none" stroke="#fff" stroke-width="1.200"/><circle cx="58.500" cy="13.500" r="4.500" fill="#e8313a"/><path d="M56.500 11.500l4 4M60.500 11.500l-4 4" stroke="#fff" stroke-width="1.200"/></svg>
      <div class="clock">19:46<br>2025/09/03</div>
    </div>
  </footer>
</div>
</body>
</html>
```
FILE: styles.css
```css
* { box-sizing: border-box; }
body { margin: 0; font-family: "Open Sans", "Noto Sans", sans-serif; font-size: 11.4px; color: #252423; overflow: hidden; }
h2, h3, h4, h5, p, ul { margin: 0; padding: 0; }
svg { flex: none; display: block; overflow: visible; }
.defs { position: absolute; }
.app { width: 1920px; height: 1080px; display: flex; flex-direction: column; }
.k { fill: none; stroke: #3b3a39; stroke-width: 1.1; }
.w { fill: #fff; stroke: #3b3a39; stroke-width: 1.1; }
.b { fill: #84bfee; stroke: #1070bd; }
.g { fill: #c8c6c4; stroke: #7a7876; }
.bl { fill: none; stroke: #1070bd; }
.thick { stroke-width: 1.5; }
.or { fill: #dc6a00; }
.fx { font: italic 18px "Liberation Serif", serif; fill: #a19f9d; }
.dax { font: bold 7px "Open Sans", sans-serif; fill: #605e5c; }
.n123 { font-size: 8.5px; fill: #1070bd; }
.rpy { font-size: 14px; font-weight: 700; fill: #2b88d8; }
.flip { transform: scaleX(-1); }

/* title bar */
.titlebar { height: 34px; flex: none; background: #3b3a39; color: #fff; display: flex; align-items: center; }
.quick { display: flex; align-items: center; width: 871px; padding-left: 16px; }
.quick svg + svg { margin-left: 15px; }
.quick .filename { margin: 6px 7px 0 10px; white-space: nowrap; width: 289px; letter-spacing: -.03px; }
.top-search { width: 400px; height: 24px; background: #c8c6c4; color: #3b3a39; border-radius: 2px; display: flex; align-items: center; padding-left: 17px; gap: 12px; font-size: 13px; }
.window { margin-left: auto; display: flex; align-items: center; padding-right: 16px; gap: 32px; }
.signin { margin-right: -21px; }
.window .avatar { margin-right: -1px; }

/* menu */
.menu { height: 32px; flex: none; background: #fafafa; display: flex; align-items: center; font-size: 13.3px; padding-left: 22px; }
.menu > span { height: 31px; line-height: 31px; flex: none; white-space: nowrap; letter-spacing: -.05px; }
.m1 { width: 59px; } .m2 { width: 38px; margin-right: 32px; } .m3 { width: 66px; } .m4 { width: 90px; } .m5 { width: 62px; } .m6 { width: 87px; }
.menu > .on { font-weight: 600; border-bottom: 3px solid #117865; letter-spacing: -.2px; }
.share { margin: 0 6px 4px auto; width: 84px; height: 24px; background: #117865; color: #fff; border: 0; border-radius: 4px; display: flex; align-items: center; gap: 7px; padding: 0 7px; font: 11.4px "Open Sans", sans-serif; align-self: flex-end; }
.share span { margin-right: -4px; }

/* ribbon */
.ribbon { height: 94px; flex: none; background: #fafafa; display: flex; position: relative; z-index: 2; box-shadow: 0 2px 6px rgba(0,0,0,.22); padding-top: 4px; }
.group { height: 88px; border-right: 1px solid #d2d0ce; display: flex; flex-direction: column; justify-content: space-between; }
.items { display: flex; height: 74px; padding-top: 6px; }
.item { display: flex; flex-direction: column; align-items: center; white-space: nowrap; text-align: center; line-height: 16px; letter-spacing: -.15px; }
.item > svg { margin-bottom: 2px; }
.cv { width: 8px; height: 8px; display: inline-block; margin-left: 2px; }
.off { color: #c1bfbd; }
.group h4 { font-size: 9.6px; font-weight: 400; text-align: center; line-height: 12px; height: 12px; }
.g-clip { width: 161px; } .g-data { width: 370px; } .g-data .items { padding-left: 4px; }
.w-paste { width: 45px; padding-left: 12px; margin-right: 5px; }
.w-paste svg { margin-left: 2px; }
.clip-list { display: flex; flex-direction: column; gap: 8px; padding: 0 0 0 2px; margin-top: -2px; }
.clip-list div { display: flex; align-items: center; gap: 3px; height: 16px; white-space: nowrap; letter-spacing: -.05px; }
.clip-list svg { width: 17px; }
.i1 { width: 48px; } .i2 { width: 50px; } .i3 { width: 64px; } .i4 { width: 45px; } .i5 { width: 33px; } .i6 { width: 64px; } .i7 { width: 50px; }
.i1 > svg { margin-left: 5px; } .i2 > svg { margin-left: 5px; } .i3 > svg { margin-left: 3px; } .i4 > svg { margin-left: 2px; }
.i7 > svg { margin-left: 4px; } .n1 > svg { margin-left: 2px; } .n3 > svg { margin-left: 2px; } .c3 > svg { margin-left: -4px; } .pub > svg { margin-left: 5px; }
.g-quer { width: 117px; } .g-quer .items { padding-left: 5px; } .q1 { width: 62px; } .q2 { width: 38px; }
.g-ins { width: 147px; } .g-ins .items { padding-left: 7px; } .n1 { width: 42px; } .n2 { width: 37px; } .n3 { width: 54px; }
.g-calc { width: 188px; } .g-calc .items { padding-left: 9px; } .c1 { width: 71px; } .c2 { width: 51px; } .c3 { width: 47px; }
.g-sens { width: 73px; } .g-share { width: 60px; } .g-cop { width: 60px; }
.g-sens .items, .g-share .items, .g-cop .items { justify-content: center; }
.collapse { margin: auto 6px 6px auto; }

/* work area */
.work { height: 856px; flex: none; display: flex; border-bottom: 1px solid #d2d0ce; }
.center { width: 1558px; display: flex; flex-direction: column; }
.stage { height: 820px; display: flex; }
.rail { width: 41px; height: 855px; background: #f3f2f1; border-right: 1px solid #e1dfdd; }
.rail div { height: 40px; display: flex; align-items: center; justify-content: center; padding-left: 1px; }
.rail .on { border-left: 3px solid #117865; padding: 0 2px 0 0; }
.gutter { background: #fff; }
.gutter.left { width: 13px; background: linear-gradient(90deg, #fff 40%, #e6e6e6); }
.gutter.right { width: 14px; border-right: 1px solid #b3b0ad; background: linear-gradient(270deg, #fff 40%, #ededed); }
.canvas { width: 1458px; background: #a6a6a6; display: flex; gap: 27px; }
.card { background: #fff; }
.din { font-family: Roboto, "Open Sans", sans-serif; font-weight: 400; font-size: 17.6px; line-height: 24px; height: 24px; white-space: nowrap; color: #252423; letter-spacing: .78px; }
.din.bold { font-weight: 700; text-align: center; letter-spacing: .48px; }
.col-left { width: 646px; }
.back { height: 46px; padding: 5px 5px; }
.pies { display: flex; gap: 18px; padding-left: 8px; height: 340px; align-items: flex-start; }
.budget { width: 323px; height: 319px; }
.rural { width: 297px; height: 321px; }
.rural .din { padding-left: 6px; }
.bars { height: 417px; }
.bars .din { padding-left: 6px; }
.bars svg { margin-top: 2px; }
.ring circle { fill: none; stroke-width: 38.1; }
.lead path { fill: none; stroke: #a6a6a6; }
.lbl { font-size: 18px; fill: #605e5c; }
.end { text-anchor: end; }
.mid { text-anchor: middle; }
.val { fill: #fff; }
.gridline { stroke: #c8c6c4; stroke-dasharray: 1 5; fill: none; }
.axis { font: 15.6px Roboto, sans-serif; fill: #252423; }
.big { font: 500 62px Roboto, sans-serif; fill: #252423; }
.col-right { width: 773px; padding-top: 23px; }
.towns { height: 342px; padding: 7px; margin-bottom: 21px; }
.improv { height: 268px; padding: 7px; margin-bottom: 12px; }
.total { height: 137px; }
table { border-collapse: collapse; table-layout: fixed; font-size: 19.6px; letter-spacing: .12px; }
.towns table { width: 721px; } .improv table { width: 463px; }
.t1 { width: 120px; } .t2 { width: 114px; } .t3 { width: 225px; } .t4 { width: 135px; } .t5 { width: 127px; }
.u1 { width: 267px; } .u2 { width: 62px; } .u3 { width: 134px; }
th { font-weight: 400; text-align: left; vertical-align: top; height: 43px; padding: 0 0 0 6px; line-height: 32px; white-space: nowrap; border-bottom: 1px solid #2a8ef0; letter-spacing: .33px; }
.towns th:last-child { text-align: right; padding-right: 7px; }
.sort { display: block; width: 0; border: 7px solid transparent; border-top: 0; border-bottom: 7px solid #252423; margin-top: -1px; }
td { height: 32px; line-height: 30px; padding: 1px 6px; text-align: right; white-space: nowrap; }
td:first-child { text-align: left; }
tbody tr:nth-child(even) td { background: #ececec; }
tfoot td { font-weight: 700; border-top: 1px solid #2a8ef0; line-height: 30px; padding: 0 5px 0 6px; letter-spacing: .75px; }
tfoot td:first-child { letter-spacing: .1px; }
.filters { width: 32px; background: #fff; display: flex; flex-direction: column; align-items: center; padding-top: 12px; }
.filters svg + svg { margin-top: 15px; margin-left: 3px; }
.filters span { writing-mode: vertical-rl; font-size: 15px; font-weight: 600; margin: 8px 0 0 2px; letter-spacing: -.2px; }

/* page tabs */
.pages { height: 35px; margin-left: 41px; background: #f3f2f1; display: flex; }
.views { width: 127px; display: flex; }
.view { margin-left: 10px; width: 24px; height: 31px; padding: 7px 0 0 2px; }
.view.on { border-bottom: 3px solid #117865; }
.view + .view { margin-left: 22px; padding: 5px 0 0 3px; }
.arrows { margin: 13px 0 0 13px; }
.tab { background: #fff; border-left: 1px solid #c8c6c4; line-height: 37px; text-align: center; flex: none; letter-spacing: -.1px; padding-right: 1px; }
.p1 { width: 86px; } .p2 { width: 81px; } .p3 { width: 117px; } .p4 { width: 139px; } .p5 { width: 91px; } .p6 { width: 78px; } .p7 { width: 74px; } .p8 { width: 81px; } .p9 { width: 86px; } .p10 { width: 84px; }
.tab.on { font-weight: 600; border-bottom: 4px solid #117865; position: relative; }
.close { position: absolute; right: 4px; top: 1px; line-height: 14px; font-size: 10.5px; font-weight: 600; }
.add { width: 39px; background: #117865; display: flex; align-items: center; justify-content: center; padding-bottom: 2px; }

/* panes */
.viz, .data { background: #f3f2f1; border-left: 1px solid #e1dfdd; width: 181px; }
.phead { display: flex; justify-content: space-between; align-items: center; padding: 7px 7px 0 8px; height: 31px; }
.phead h2 { font-size: 15.2px; font-weight: 600; letter-spacing: -.1px; }
.viz h5 { font-size: 11.4px; font-weight: 600; line-height: 16px; margin: 6px 0 4px 8px; }
.modes { display: flex; gap: 34px; padding-left: 8px; }
.mode { width: 32px; height: 32px; display: flex; align-items: center; justify-content: center; }
.mode.on { background: #c8c6c4; border-radius: 2px; }
.notch { margin-top: 4px; }
.gallery { display: grid; grid-template-columns: repeat(6, 18px); gap: 10px; padding: 10px 0 0 11px; }
.gallery svg { width: 18px; height: 18px; }
.more { font-size: 18px; line-height: 18px; height: 38px; padding: 3px 0 0 12px; letter-spacing: 1px; border-bottom: 1px solid #d2d0ce; }
.wells { padding: 9px 6px 0 4px; font-size: 11.6px; }
.wells p, .row { padding-left: 8px; line-height: 16px; }
.drop { margin-top: 5px; height: 28px; border: 1px dashed #bebbb8; background: #fff; border-radius: 2px; padding-left: 10px; line-height: 27px; }
.wells p.dt { margin-top: 11px; font-weight: 600; color: #484644; letter-spacing: -.1px; }
.row { display: flex; justify-content: space-between; padding-right: 16px; margin-top: 9px; }
.row + .row { margin-top: 11px; }
.toggle { width: 32px; height: 16px; border: 1px solid #797775; border-radius: 8px; background: #fff; font-size: 9px; line-height: 14px; display: flex; align-items: center; justify-content: center; gap: 2px; color: #605e5c; }
.toggle i { width: 8px; height: 8px; border-radius: 50%; background: #605e5c; }
.toggle.on { background: #117865; border-color: #117865; color: #fff; }
.toggle.on i { background: #fff; }
.tall { height: 58px; padding: 2px; margin-top: 10px; }
.field { height: 43px; border: 1px solid #d8d6d4; border-radius: 2px; background: #fafafa; display: flex; justify-content: space-between; line-height: 19px; padding: 1px 3px 0 8px; font-size: 11.4px; }
.field svg { margin-top: 5px; }
.dsearch { margin: 14px 4px 0; height: 24px; background: #fff; border: 1px solid #c8c6c4; border-bottom-color: #605e5c; border-radius: 4px; display: flex; align-items: center; gap: 8px; padding-left: 11px; color: #605e5c; font-size: 12.6px; }
.data ul { list-style: none; padding: 9px 0 0 15px; }
.data li { height: 24px; display: flex; align-items: center; gap: 6px; white-space: nowrap; letter-spacing: -.1px; }
.data li svg + svg { margin-right: -2px; }

/* status */
.status { height: 24px; flex: none; background: #f3f2f1; border-bottom: 1px solid #000; display: flex; align-items: center; color: #3b3a39; padding: 1px 5px 0 4px; }
.zoom { margin-left: auto; margin-right: 11px; }
.pct { width: 42px; font-size: 12px; letter-spacing: -.3px; } .fit { margin-right: 13px; }
.upd { width: 191px; white-space: nowrap; }

/* taskbar */
.taskbar { height: 40px; flex: none; background: #1d2023; color: #fff; display: flex; }
.start { width: 48px; display: flex; align-items: center; justify-content: center; }
.tsearch { width: 344px; background: #f2f2f2; border: 1px solid #c8c6c4; color: #3b3a39; display: flex; align-items: center; gap: 12px; padding-left: 10px; font-size: 14.1px; }
.chrome { width: 53px; display: flex; align-items: center; justify-content: center; }
.task { width: 152px; margin: 0 4px; border-bottom: 2px solid #76b9ed; display: flex; align-items: center; gap: 6px; padding-left: 8px; white-space: nowrap; }
.folder { gap: 10px; }
.blank { padding-left: 34px; }
.active { width: 160px; margin: 0; padding-left: 12px; background: #4b4d50; }
.tray { margin-left: auto; display: flex; align-items: center; padding-right: 9px; gap: 10px; }
.clock { text-align: center; line-height: 17px; }
```
